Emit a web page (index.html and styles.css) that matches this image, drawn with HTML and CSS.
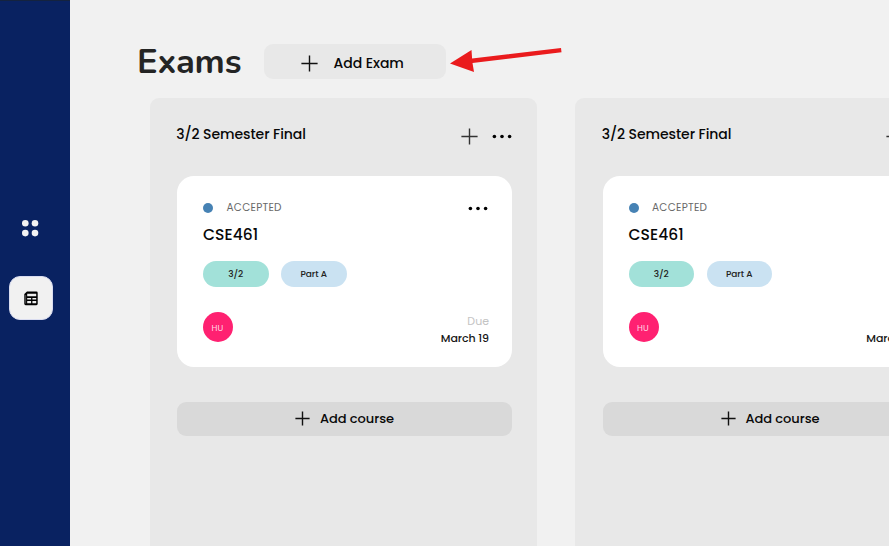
FILE: index.html
```html
<!DOCTYPE html>
<html lang="en">
<head>
<meta charset="utf-8">
<title>Exams</title>
<link rel="stylesheet" href="styles.css">
</head>
<body>
<div class="app">
  <nav class="sidebar">
    <svg class="nav-dots" width="18" height="18" viewBox="0 0 18 18"><circle cx="4.3" cy="4.3" r="3.3"/><circle cx="14" cy="4.3" r="3.3"/><circle cx="4.3" cy="14.1" r="3.3"/><circle cx="14" cy="14.1" r="3.3"/></svg>
    <div class="nav-active">
      <svg width="14" height="15" viewBox="0 0 14 15"><path d="M3 .6H12.4Q13.7.6 13.7 2V12.8Q13.7 14.2 12.4 14.2H1.6Q.3 14.2.3 12.8V3L3 .6Z" fill="#000"/><path d="M3.2 2.8H12.2V5.2H3.2ZM3.2 6.9H7.1V8.5H3.2ZM8.4 6.9H12.2V8.5H8.4ZM3.2 10.1H7.1V12.2H3.2ZM8.4 10.1H12.2V12.2H8.4Z" fill="#eee"/><path d="M1.7 4V12.5" stroke="#777" stroke-width=".7"/></svg>
    </div>
  </nav>
  <main class="main">
    <header class="header">
      <h1 class="page-title"><span class="t-page">Exams</span></h1>
      <div class="add-exam"><svg width="17" height="17" viewBox="0 0 17 17"><path class="plus" d="M8.5 .4V16.6M.4 8.5H16.6"/></svg><span class="t-add-exam">Add Exam</span></div>
      <svg class="arrow" width="113" height="28" viewBox="0 0 113 28"><path d="M0 17.5 21.5 4 22.1 12.5 111 2 111.5 6.2 22.5 17 24 26Z" fill="#ea1b1d"/></svg>
    </header>
    <div class="board">
      <section class="column">
        <div class="column-head"><h2 class="t-column">3/2 Semester Final</h2><div class="column-actions"><svg width="17" height="17" viewBox="0 0 17 17"><path class="plus soft" d="M8.5 .4V16.6M.4 8.5H16.6"/></svg><svg width="20" height="5" viewBox="0 0 20 5"><circle cx="2.4" cy="2.5" r="1.8"/><circle cx="10" cy="2.5" r="1.8"/><circle cx="17.6" cy="2.5" r="1.8"/></svg></div></div>
        <article class="card">
          <div class="status"><i class="dot"></i><span class="t-status">ACCEPTED</span><svg class="more" width="20" height="5" viewBox="0 0 20 5"><circle cx="2.4" cy="2.5" r="1.8"/><circle cx="10" cy="2.5" r="1.8"/><circle cx="17.6" cy="2.5" r="1.8"/></svg></div>
          <h3 class="t-course">CSE461</h3>
          <div class="tags"><span class="tag mint">3/2</span><span class="tag sky">Part A</span></div>
          <div class="card-foot"><span class="avatar">HU</span><div class="due"><span class="t-due">Due</span><span class="t-date">March 19</span></div></div>
        </article>
        <div class="add-course"><svg width="15" height="15" viewBox="0 0 15 15"><path class="plus" d="M7.5 .4V14.6M.4 7.5H14.6"/></svg><span class="t-add-course">Add course</span></div>
      </section>
      <section class="column">
        <div class="column-head"><h2 class="t-column">3/2 Semester Final</h2><div class="column-actions"><svg width="17" height="17" viewBox="0 0 17 17"><path class="plus soft" d="M8.5 .4V16.6M.4 8.5H16.6"/></svg><svg width="20" height="5" viewBox="0 0 20 5"><circle cx="2.4" cy="2.5" r="1.8"/><circle cx="10" cy="2.5" r="1.8"/><circle cx="17.6" cy="2.5" r="1.8"/></svg></div></div>
        <article class="card">
          <div class="status"><i class="dot"></i><span class="t-status">ACCEPTED</span><svg class="more" width="20" height="5" viewBox="0 0 20 5"><circle cx="2.4" cy="2.5" r="1.8"/><circle cx="10" cy="2.5" r="1.8"/><circle cx="17.6" cy="2.5" r="1.8"/></svg></div>
          <h3 class="t-course">CSE461</h3>
          <div class="tags"><span class="tag mint">3/2</span><span class="tag sky">Part A</span></div>
          <div class="card-foot"><span class="avatar">HU</span><div class="due"><span class="t-due">Due</span><span class="t-date">March 19</span></div></div>
        </article>
        <div class="add-course"><svg width="15" height="15" viewBox="0 0 15 15"><path class="plus" d="M7.5 .4V14.6M.4 7.5H14.6"/></svg><span class="t-add-course">Add course</span></div>
      </section>
    </div>
  </main>
</div>
</body>
</html>
```
FILE: styles.css
```css
* { box-sizing: border-box; }
body { margin: 0; overflow: hidden; background: #f1f1f1; color: #080808; font-family: Poppins, Inter, sans-serif; }
h1, h2, h3 { margin: 0; font-weight: 500; }
svg { display: block; flex: none; }
.app { display: flex; width: 889px; height: 546px; overflow: hidden; }
.sidebar { flex: none; width: 70px; padding-top: 218px; background: #092261; border-top: 1px solid #14233f; }
.nav-dots { margin-left: 21px; fill: #f3f3f3; }
.nav-active { width: 44px; height: 44px; margin: 39px 0 0 9px; border-radius: 11px; background: #f1f1f1; display: flex; align-items: center; justify-content: center; border: 1px solid #d9dcf0; }
.main { flex: 1; min-width: 0; overflow: hidden; }
.header { display: flex; align-items: flex-start; height: 98px; padding: 44px 0 0 67px; }
.page-title { flex: none; width: 126.5px; height: 35px; font: 700 34.5px/35px Nunito, "Open Sans", sans-serif; color: #242424; white-space: nowrap; }
.t-page { letter-spacing: -0.2px; }
.add-exam { flex: none; width: 182.5px; height: 35px; padding: 3px 0 0 37px; border-radius: 9px; background: #e8e8e8; display: flex; align-items: center; gap: 16px; }
.add-exam svg { margin-top: 1px; }
.t-add-exam { font-size: 14px; font-weight: 500; line-height: 18px; letter-spacing: -.05px; white-space: nowrap; }
.arrow { margin: 2px 0 0 4px; }
.plus { fill: none; stroke: #111; stroke-width: 1.4; }
.soft { stroke: #333; }
.board { display: flex; gap: 38px; padding-left: 79.5px; height: 448px; }
.column { flex: none; width: 387.5px; padding: 26px 25px 0 27.5px; border-radius: 9px 9px 0 0; background: #e8e8e8; }
.column-head { display: flex; justify-content: space-between; height: 52px; }
.t-column { margin-left: -.8px; font-size: 14px; line-height: 20px; letter-spacing: -.08px; white-space: nowrap; }
.column-actions { display: flex; align-items: center; gap: 14.5px; height: 25px; }
.card { width: 335px; height: 191px; padding: 23.5px 23px 0 26px; border-radius: 17px; background: #fff; }
.status { display: flex; align-items: center; height: 16px; }
.dot { width: 10px; height: 10px; margin-right: 13.5px; border-radius: 50%; background: #4682b4; }
.t-status { font-size: 10.5px; line-height: 16px; letter-spacing: .25px; color: #686868; }
.more { margin: 2.5px 1px 0 auto; }
.t-course { margin-top: 6px; font-size: 15.5px; line-height: 25px; letter-spacing: .08px; white-space: nowrap; }
.tags { display: flex; gap: 12.5px; margin-top: 14px; }
.tag { width: 65.5px; height: 26px; border-radius: 13px; font-size: 9px; font-weight: 500; line-height: 26px; letter-spacing: -.05px; text-align: center; color: #222; }
.mint { background: #a2e1d9; }
.sky { background: #cae2f2; }
.card-foot { display: flex; justify-content: space-between; margin-top: 25px; }
.avatar { width: 30px; height: 30px; margin-left: .4px; border-radius: 50%; background: #ff2171; color: #ffd7e4; font-size: 8.5px; line-height: 33px; text-align: center; padding-right: 2px; }
.due { display: flex; flex-direction: column; align-items: flex-end; margin-top: 1px; font-size: 11px; line-height: 17px; }
.t-due { color: #c4c4c4; }
.t-date { font-weight: 500; letter-spacing: -.08px; color: #161616; }
.add-course { width: 335px; height: 34px; margin-top: 35px; border-radius: 9px; background: #d9d9d9; display: flex; align-items: center; gap: 10px; padding: 0 0 1px 118px; }
.t-add-course { font-size: 13px; font-weight: 500; line-height: 18px; letter-spacing: -.05px; white-space: nowrap; }
```
